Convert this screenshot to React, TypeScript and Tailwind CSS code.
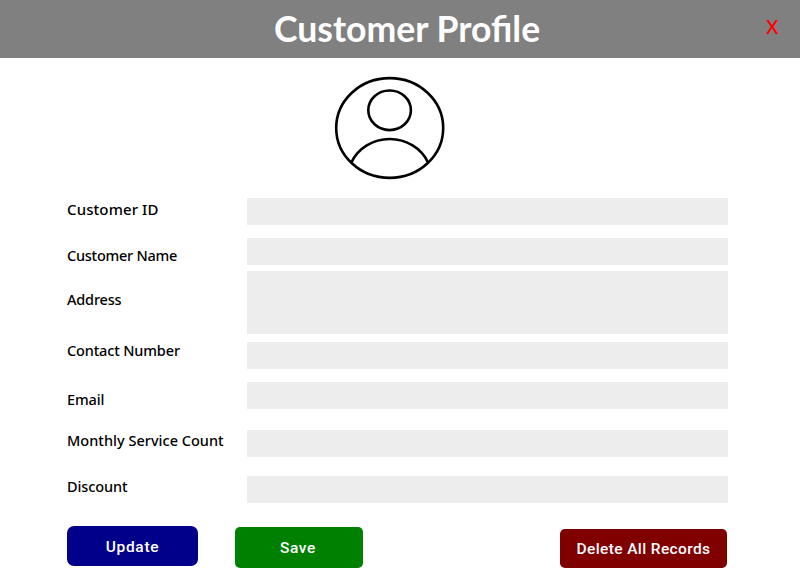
const rows = [
  { label: 'Customer ID', row: 'h-[27px]', text: 'mt-[2px] text-[15px] tracking-[0.1px]', lead: 'leading-[18px]' },
  { label: 'Customer Name', row: 'mt-[13px] h-[27px]', text: 'mt-[7px] text-[14.5px] tracking-[-0.25px]', lead: 'leading-5' },
  { label: 'Address', row: 'mt-[6px] h-[63px]', text: 'mt-[18px] text-[14.5px] tracking-[-0.2px]', lead: 'leading-5' },
  { label: 'Contact Number', row: 'mt-2 h-[27px]', text: '-mt-[2px] text-[14.5px] tracking-[-0.15px]', lead: 'leading-5' },
  { label: 'Email', row: 'mt-[13px] h-[27px]', text: 'mt-[7px] text-[14.5px] tracking-[-0.1px]', lead: 'leading-5' },
  { label: 'Monthly Service Count', row: 'mt-[21px] h-[27px]', text: 'text-[14.5px] tracking-[0.02px]', lead: 'leading-5' },
  { label: 'Discount', row: 'mt-[19px] h-[27px]', text: 'text-[14.5px] tracking-[-0.1px]', lead: 'leading-5' },
];

function Avatar() {
  return (
    <svg className="mt-[18px] ml-[334px] h-[104px] w-[112px]" viewBox="334 76 112 104" fill="none" stroke="black" strokeWidth="2.6">
      <ellipse cx="389.7" cy="128" rx="53.5" ry="49.9" />
      <ellipse cx="389.6" cy="110.3" rx="21.3" ry="19.8" />
      <path d="M351.4 162.5A41.7 38.8 0 0 1 428 162.5" />
    </svg>
  );
}

export default function App() {
  return (
    <div className="h-[579px] w-[800px] overflow-hidden bg-white text-black">
      <header className="flex h-[58px] bg-[#808080]">
        <h1 className="ml-[274px] w-[479px] font-['Lato',sans-serif] text-[35.6px] leading-[57px] font-bold whitespace-nowrap text-white">Customer Profile</h1>
        <button className="ml-[13px] h-[53px] font-['Noto_Sans',sans-serif] text-[20.5px] leading-[53px] font-medium text-[#ff0000]">X</button>
      </header>
      <Avatar />
      <main className="mt-[18px] ml-[67px] w-[661px]">
        {rows.map((r) => (
          <div key={r.label} className={`flex items-start ${r.row}`}>
            <label className={`w-[180px] shrink-0 font-['Noto_Sans',sans-serif] font-medium whitespace-nowrap ${r.text} ${r.lead}`}>
              {r.label}
            </label>
            <div className="h-full flex-1 bg-[#ededed]" />
          </div>
        ))}
        <div className="mt-[23px] flex items-start font-['Roboto',sans-serif] text-[15.5px] font-medium whitespace-nowrap text-white">
          <button className="h-10 w-[131px] rounded-[7px] bg-[#00008b] pt-[3px] tracking-[0.7px]">Update</button>
          <button className="mt-px ml-[37px] h-[41px] w-[128px] rounded-[5px] bg-[#008000] pt-[2px] pr-[2px] tracking-[0.6px]">Save</button>
          <button className="mt-[3px] ml-[197px] h-[39px] w-[167px] rounded-[5px] bg-[#800000] pt-[2px] tracking-[0.38px]">Delete All Records</button>
        </div>
      </main>
    </div>
  );
}
